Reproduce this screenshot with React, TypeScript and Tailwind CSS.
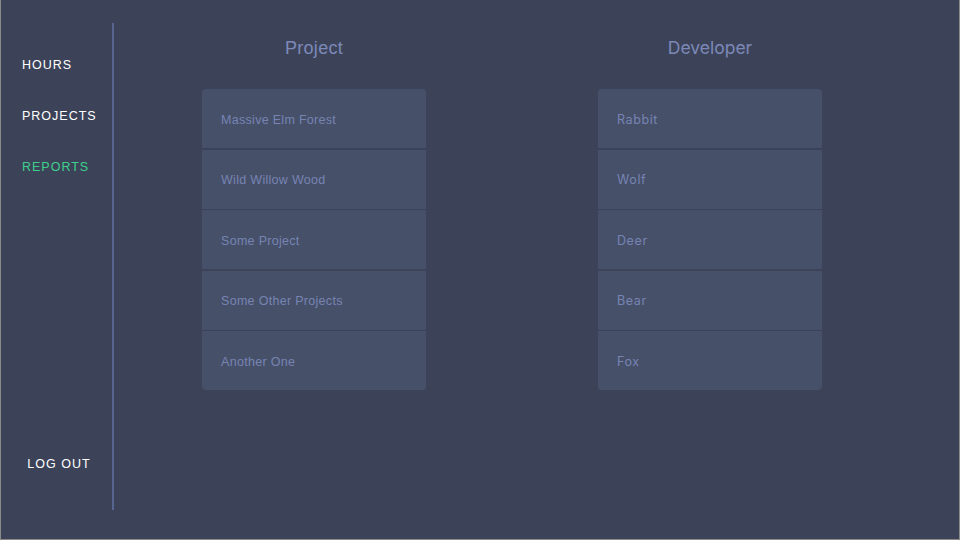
const projects = ['Massive Elm Forest', 'Wild Willow Wood', 'Some Project', 'Some Other Projects', 'Another One'];
const developers = ['Rabbit', 'Wolf', 'Deer', 'Bear', 'Fox'];

function Column({
  title,
  items,
  font,
  titleSize,
  itemTracking,
}: {
  title: string;
  items: string[];
  font: string;
  titleSize: string;
  itemTracking: string;
}) {
  return (
    <section className={`w-[224px] flex flex-col ${font}`}>
      <h2 className={`h-[89px] pt-[37px] text-center leading-[22px] text-[#7c89b8] ${titleSize}`}>
        {title}
      </h2>
      <ul className="flex flex-col gap-[1.5px] rounded-[4px] overflow-hidden">
        {items.map((item) => (
          <li
            key={item}
            className={`h-[59px] flex items-center pt-[3px] px-[19px] bg-[#465069] text-[12.5px] text-[#7784b3] ${itemTracking}`}
          >
            {item}
          </li>
        ))}
      </ul>
    </section>
  );
}

export default function App() {
  return (
    <div className="w-[960px] h-[540px] bg-[#3c4359] border-l border-r border-b border-[#8a8a8a] flex font-['Liberation_Sans',Arial,sans-serif]">
      {/* Sidebar */}
      <aside className="w-[113px] shrink-0 pt-[23px] pb-[29px] flex">
        <nav className="flex-1 flex flex-col text-[12.5px] tracking-[1px] text-white">
          <a className="pl-[21px] mt-[34px] leading-[16px]">HOURS</a>
          <a className="pl-[21px] mt-[35px] leading-[16px]">PROJECTS</a>
          <a className="pl-[21px] mt-[35px] leading-[16px] text-[#3dd08c]">REPORTS</a>
          <a className="mt-auto mb-[38px] text-center pl-[5px] leading-[16px]">LOG OUT</a>
        </nav>
        <div className="w-[2px] bg-[#57658f]" />
      </aside>

      {/* Main */}
      <main className="flex-1 flex gap-[172px] pl-[88px]">
        <Column
          title="Project"
          items={projects}
          font="font-['Liberation_Sans',Arial,sans-serif]"
          titleSize="text-[18px] tracking-[0.3px]"
          itemTracking="tracking-[0.3px]"
        />
        <Column
          title="Developer"
          items={developers}
          font="font-['Inter',sans-serif]"
          titleSize="text-[17.5px] tracking-[0px]"
          itemTracking="tracking-[0.6px]"
        />
      </main>
    </div>
  );
}
